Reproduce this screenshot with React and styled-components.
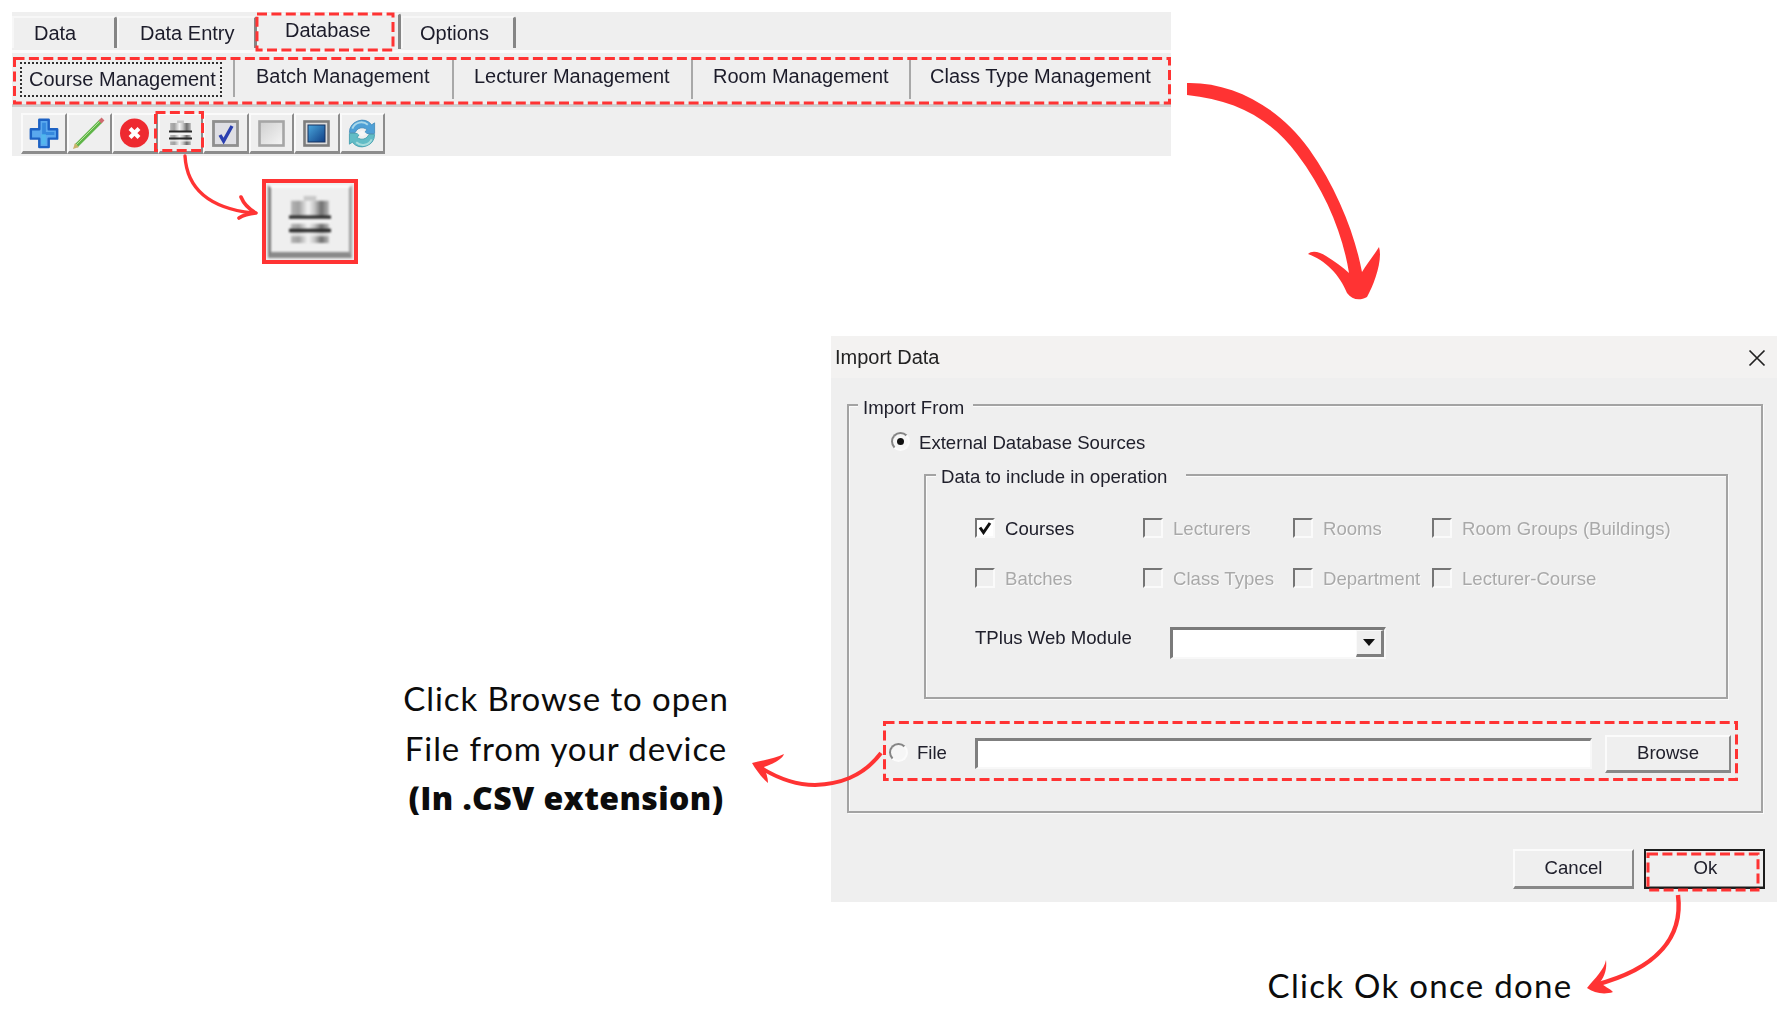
import React from "react";
import styled, { createGlobalStyle } from "styled-components";

const Global = createGlobalStyle`
  html, body { margin: 0; padding: 0; background: #fff; }
  * { box-sizing: border-box; }
`;

const Canvas = styled.div`
  position: relative;
  width: 1788px;
  height: 1020px;
  overflow: hidden;
  background: #fff;
  font-family: "Liberation Sans", Arial, sans-serif;
`;

/* ---------- app ribbon window ---------- */
const Ribbon = styled.section`
  position: absolute;
  left: 12px;
  top: 12px;
  width: 1159px;
  height: 144px;
  background: #efefef;
  display: flex;
  flex-direction: column;
  filter: blur(0.5px);
  color: #1c1c2a;
  font-size: 20px;
`;

const TabRow = styled.div`
  display: flex;
  height: 38px;
  padding-top: 4px;
  flex: none;
`;

const Tab = styled.div`
  flex: none;
  width: ${(p) => p.$w}px;
  height: ${(p) => (p.$raised ? 36 : 32)}px;
  margin-top: ${(p) => (p.$raised ? -3 : 0)}px;
  padding-left: ${(p) => p.$pad}px;
  line-height: ${(p) => (p.$raised ? 31 : 30)}px;
  border-top: 2px solid #f7f7f7;
  border-left: 2px solid #f7f7f7;
  border-right: 3px solid #858585;
  border-top-right-radius: 3px;
  white-space: nowrap;
`;

const SubBar = styled.div`
  display: flex;
  height: 57px;
  flex: none;
  padding-top: 6px;
  border-top: 3px solid #fbfbfb;
  border-bottom: 3px solid #cfcfcf;
`;

const SubTab = styled.div`
  flex: none;
  width: ${(p) => p.$w}px;
  height: 40px;
  padding-left: ${(p) => p.$pad}px;
  line-height: 34px;
  white-space: nowrap;
  border-right: ${(p) => (p.$last ? "none" : "2px solid #a8a8a8")};
`;

const FocusTab = styled.div`
  flex: none;
  width: 223px;
  height: 38px;
  padding: 3px 0 0 8px;
  border-right: 2px solid #a8a8a8;
`;

const FocusLabel = styled.div`
  width: 202px;
  height: 35px;
  padding-left: 7px;
  line-height: 30px;
  white-space: nowrap;
  border: 2px dotted #303030;
`;

const Toolbar = styled.div`
  display: flex;
  padding: 6px 0 0 9px;
`;

const ToolButton = styled.div`
  width: 45.5px;
  height: 41px;
  flex: none;
  display: flex;
  align-items: center;
  justify-content: center;
  background: #efefef;
  border-top: 2px solid #fafafa;
  border-left: 2px solid #fafafa;
  border-right: 2px solid #8c8c8c;
  border-bottom: 3px solid #8c8c8c;
`;

const ZoomFrame = styled.div`
  position: absolute;
  left: 262px;
  top: 179px;
  width: 96px;
  height: 85px;
  border: 4px solid #ff3333;
  background: #efefef;
  padding: 2px;
  display: flex;
`;

const ZoomButton = styled.div`
  flex: 1;
  display: flex;
  align-items: center;
  justify-content: center;
  border-top: 3px solid #fafafa;
  border-left: 3px solid #7c7c7c;
  border-right: 3px solid #a0a0a0;
  border-bottom: 6px solid #8a8a8a;
  filter: blur(1.1px);
`;

/* ---------- import dialog ---------- */
const Dialog = styled.section`
  position: absolute;
  left: 831px;
  top: 336px;
  width: 946px;
  height: 566px;
  background: #efefef;
  display: flex;
  flex-direction: column;
  font-size: 18.6px;
  color: #20202c;
  filter: blur(0.45px);
`;

const TitleBar = styled.header`
  height: 42px;
  flex: none;
  background: #f3f2f1;
  display: flex;
  align-items: center;
  justify-content: space-between;
  padding: 4px 11px 3px 4px;
  font-size: 20px;
  color: #222;
`;

const Body = styled.div`
  flex: 1;
  padding: 26px 14px 0 16px;
  display: flex;
  flex-direction: column;
`;

const Group = styled.div`
  position: relative;
  border: 2px solid #a3a3a3;
  box-shadow: 1px 1px 0 #fbfbfb, inset 1px 1px 0 #fbfbfb;
`;

const OuterGroup = styled(Group)`
  height: 409px;
  padding: 22px 33px 0 42px;
`;

const InnerGroup = styled(Group)`
  height: 225px;
  margin: 16px 0 0 33px;
  padding: 28px 0 0 49px;
`;

const Legend = styled.span`
  position: absolute;
  top: ${(p) => p.$top}px;
  left: ${(p) => p.$left}px;
  width: ${(p) => p.$w}px;
  height: 26px;
  padding-left: 5px;
  line-height: 26px;
  background: #efefef;
  white-space: nowrap;
`;

const RadioRow = styled.label`
  display: flex;
  align-items: center;
  height: 30px;
  gap: 9px;
`;

const Radio = styled.span`
  width: 19px;
  height: 19px;
  flex: none;
  border-radius: 50%;
  background: #f6f6f6;
  border: 2px solid;
  border-color: #858585 #fbfbfb #fbfbfb #858585;
  display: flex;
  align-items: center;
  justify-content: center;
  margin-top: -3px;

  &::after {
    content: "";
    display: ${(p) => (p.$on ? "block" : "none")};
    width: 7px;
    height: 7px;
    border-radius: 50%;
    background: #111;
  }
`;

const CheckGrid = styled.div`
  display: grid;
  grid-template-columns: 168px 150px 139px auto;
  grid-auto-rows: 50px;
  justify-content: start;
`;

const Check = styled.div`
  display: flex;
  align-items: center;
  gap: 10px;
  white-space: nowrap;
  color: ${(p) => (p.$off ? "#a9a9a9" : "#20202c")};
  text-shadow: ${(p) => (p.$off ? "1px 1px 0 #fbfbfb" : "none")};
`;

const CheckBox = styled.span`
  width: 20px;
  height: 20px;
  flex: none;
  margin-top: -2px;
  background: ${(p) => (p.$on ? "#fff" : "#efefef")};
  border-top: 2px solid #757575;
  border-left: 2px solid #757575;
  border-right: 2px solid #fafafa;
  border-bottom: 2px solid #fafafa;
  display: flex;
  align-items: center;
  justify-content: center;
`;

const ComboRow = styled.div`
  display: flex;
  align-items: flex-start;
  margin-top: 24px;
`;

const ComboLabel = styled.span`
  width: 195px;
  flex: none;
  line-height: 20px;
  white-space: nowrap;
`;

const Combo = styled.div`
  width: 216px;
  height: 32px;
  flex: none;
  background: #fff;
  margin-top: -1px;
  border-top: 3px solid #7a7a7a;
  border-left: 3px solid #7a7a7a;
  border-right: 2px solid #f8f8f8;
  border-bottom: 2px solid #f8f8f8;
  display: flex;
  justify-content: flex-end;
`;

const ComboButton = styled.div`
  width: 28px;
  background: #efefef;
  border-top: 1px solid #fafafa;
  border-left: 1px solid #fafafa;
  border-right: 3px solid #7f7f7f;
  border-bottom: 3px solid #7f7f7f;
  display: flex;
  align-items: center;
  justify-content: center;

  &::after {
    content: "";
    border-left: 6px solid transparent;
    border-right: 6px solid transparent;
    border-top: 7px solid #111;
  }
`;

const FileRow = styled.div`
  display: flex;
  align-items: center;
  height: 38px;
  margin: 36px 0 0 -2px;
`;

const FileLabel = styled.span`
  width: 58px;
  flex: none;
  margin-top: -2px;
`;

const FileInput = styled.div`
  width: 617px;
  height: 31px;
  flex: none;
  margin-top: -2px;
  background: #fff;
  border-top: 3px solid #7f7f7f;
  border-left: 3px solid #7f7f7f;
  border-right: 2px solid #f8f8f8;
  border-bottom: 2px solid #f8f8f8;
`;

const WinButton = styled.div`
  flex: none;
  width: ${(p) => p.$w}px;
  height: ${(p) => p.$h}px;
  margin-left: ${(p) => p.$ml || 0}px;
  display: flex;
  align-items: center;
  justify-content: center;
  padding-bottom: 2px;
  background: #efefef;
  border-top: 2px solid #fbfbfb;
  border-left: 2px solid #fbfbfb;
  border-right: 2px solid #888;
  border-bottom: 3px solid #888;
`;

const DefaultButton = styled(WinButton)`
  outline: 2px solid #1d1d1d;
  outline-offset: -2px;
  border-top-color: #fbfbfb;
  padding: 0 0 2px 2px;
`;

const Footer = styled.footer`
  display: flex;
  justify-content: flex-end;
  margin: 36px -2px 0 0;
`;

/* ---------- annotations ---------- */
const Overlay = styled.svg`
  position: absolute;
  inset: 0;
  width: 1788px;
  height: 1020px;
  pointer-events: none;
`;

const Note = styled.div`
  position: absolute;
  left: ${(p) => p.$x}px;
  top: ${(p) => p.$y}px;
  width: ${(p) => p.$w}px;
  text-align: center;
  font-family: Lato, "Open Sans", sans-serif;
  font-size: 33px;
  line-height: 50px;
  color: #0c0c0c;
  letter-spacing: ${(p) => p.$track}px;
  white-space: nowrap;
`;

const NoteStrong = styled.strong`
  display: block;
  font-family: "Open Sans", Lato, sans-serif;
  font-size: 32px;
  font-weight: 800;
  letter-spacing: 0.4px;
`;

/* ---------- icons ---------- */
const PlusIcon = () => (
  <svg width="32" height="32" viewBox="0 0 32 34">
    <path d="M11 3h10v10h9v10h-9v9H11v-9H2V13h9z" fill="#5aa8ee" stroke="#1d62c4" strokeWidth="2.6" strokeLinejoin="round" />
    <path d="M14 6h4v10h9v3H14z" fill="#2a7fd8" opacity=".75" />
    <path d="M13 18h5v11h-5z" fill="#4cc0ef" opacity=".6" />
  </svg>
);

const PencilIcon = () => (
  <svg width="38" height="34" viewBox="0 0 36 34">
    <path d="M5 30 30 5" stroke="#5fb548" strokeWidth="4" />
    <path d="M5 29 30 4" stroke="#b7e29c" strokeWidth="1" />
    <path d="M29 6l3-3" stroke="#d06a70" strokeWidth="4" />
    <path d="M2 33l2-6 4 4z" fill="#c9b26a" />
  </svg>
);

const StopIcon = () => (
  <svg width="31" height="32" viewBox="0 0 30 32">
    <circle cx="15" cy="16" r="14.5" fill="#ee2a30" />
    <path d="M10.5 11.5l9 9M19.5 11.5l-9 9" stroke="#fff" strokeWidth="4" />
  </svg>
);

const DatabaseIcon = ({ w, h, id }) => (
  <svg width={w} height={h} viewBox="0 0 20 26" preserveAspectRatio="none">
    <defs>
      <linearGradient id={id} x1="0" y1="0" x2="1" y2="0">
        <stop offset="0" stopColor="#b4b4b4" />
        <stop offset=".2" stopColor="#a0a0a0" />
        <stop offset=".45" stopColor="#f4f4f4" />
        <stop offset=".62" stopColor="#c4c4c4" />
        <stop offset=".8" stopColor="#6e6e6e" />
        <stop offset="1" stopColor="#b8b8b8" />
      </linearGradient>
    </defs>
    <path d="M1 3h18v22H1z" fill={`url(#${id})`} />
    <path d="M7 0.5h6V3H7z" fill="#c8c8c8" />
    <path d="M0 13.5h20" stroke="#f3f3f3" strokeWidth="3" />
    <path d="M0 20.5h20" stroke="#f0f0f0" strokeWidth="2" opacity=".8" />
    <path d="M0 11.5h20M0 18.5h20" stroke="#2a2a2a" strokeWidth="1.8" />
  </svg>
);

const TickIcon = () => (
  <svg width="27" height="27" viewBox="0 0 27 27">
    <rect x="1.5" y="1.5" width="24" height="24" fill="#dfdfe4" stroke="#8f8f8f" strokeWidth="2.8" />
    <path d="M8 15l3.6 6L20 6" fill="none" stroke="#2a3fb0" strokeWidth="3.4" />
  </svg>
);

const BlankIcon = () => (
  <svg width="27" height="27" viewBox="0 0 27 27">
    <defs>
      <linearGradient id="blank" x1="0" y1="0" x2="1" y2="1">
        <stop offset="0" stopColor="#cfcfcf" />
        <stop offset="1" stopColor="#f6f6f6" />
      </linearGradient>
    </defs>
    <rect x="1.5" y="1.5" width="24" height="24" fill="url(#blank)" stroke="#a6a6a6" strokeWidth="2.6" />
  </svg>
);

const FillIcon = () => (
  <svg width="27" height="27" viewBox="0 0 27 27">
    <defs>
      <linearGradient id="fill" x1="0" y1="0" x2="1" y2="1">
        <stop offset="0" stopColor="#4aa6dc" />
        <stop offset="1" stopColor="#103f86" />
      </linearGradient>
    </defs>
    <rect x="1.5" y="1.5" width="24" height="24" fill="#dcdcdc" stroke="#7d7d7d" strokeWidth="2.6" />
    <rect x="5" y="5" width="17" height="17" fill="url(#fill)" stroke="#17335f" strokeWidth="1" />
  </svg>
);

const RefreshIcon = () => (
  <svg width="32" height="31" viewBox="0 0 32 32">
    <path d="M3 15A13 13 0 0 1 26 7l3-2v11h-11l3-4a7.5 7.5 0 0 0-12 3z" fill="#4fa0d6" stroke="#3d87b5" strokeWidth=".8" />
    <path d="M6 11A10 10 0 0 1 22 7" fill="none" stroke="#a9d8ea" strokeWidth="2" />
    <path d="M29 17A13 13 0 0 1 6 25l-3 2V16h11l-3 4a7.5 7.5 0 0 0 12-3z" fill="#62bcc6" stroke="#3a98a8" strokeWidth=".8" />
    <path d="M26 22A10 10 0 0 1 10 25" fill="none" stroke="#a6dcdc" strokeWidth="2" />
    <path d="M11 16l5-3 5 3-5 3z" fill="#f6f6f6" />
  </svg>
);

const CloseIcon = () => (
  <svg width="18" height="18" viewBox="0 0 18 18">
    <path d="M1.5 1.5l15 15M16.5 1.5l-15 15" stroke="#222" strokeWidth="1.7" />
  </svg>
);

const CheckMark = () => (
  <svg width="14" height="14" viewBox="0 0 14 14">
    <path d="M2 6.5l3.5 5L12 2" fill="none" stroke="#111" strokeWidth="3" />
  </svg>
);

const DashRect = ({ x, y, w, h }) => (
  <rect x={x} y={y} width={w} height={h} fill="none" stroke="#ff3333" strokeWidth="3" strokeDasharray="10 4.4" />
);

const Annotations = () => (
  <Overlay viewBox="0 0 1788 1020">
    <DashRect x={257} y={14} w={136} h={36} />
    <DashRect x={14.5} y={58.5} w={1155} h={44.5} />
    <DashRect x={155.5} y={112.5} w={47} h={38} />
    <DashRect x={884.5} y={722.5} w={852} h={57} />
    <DashRect x={1648} y={854} w={110} h={36} />

    <path d="M185 156C187 190 210 208 252 213" fill="none" stroke="#ff3333" strokeWidth="3.4" strokeLinecap="round" />
    <path d="M241 197Q245 207 256 213Q245 214 239 218" fill="none" stroke="#ff3333" strokeWidth="3.6" strokeLinecap="round" strokeLinejoin="round" />

    <path
      fill="#ff3333"
      d="M1187 83C1232 82 1278 106 1309 149C1338 190 1355 235 1362 272C1367 264 1374 255 1379 247C1383 260 1374 285 1367 297C1360 301 1352 300 1347 293C1340 275 1325 260 1308 254C1312 250 1320 252 1326 256C1335 262 1343 267 1349 273C1343 235 1326 192 1297 154C1270 118 1235 100 1187 95Z"
    />

    <path d="M881 753C862 778 838 784 815 785C795 785 775 777 758 766" fill="none" stroke="#ff3333" strokeWidth="4" />
    <path fill="#ff3333" d="M752 763C764 760 776 758 784 754C782 760 772 764 764 767C766 772 768 778 768 783C762 778 756 770 752 763Z" />

    <path d="M1678 895C1683 935 1660 968 1595 985" fill="none" stroke="#ff3333" strokeWidth="4.4" />
    <path fill="#ff3333" d="M1587 988C1595 978 1604 970 1606 960C1607 968 1605 976 1600 982C1604 987 1610 988 1613 992C1604 995 1594 993 1587 988Z" />
  </Overlay>
);

const tabs = [
  { label: "Data", w: 105, pad: 20 },
  { label: "Data Entry", w: 140, pad: 21 },
  { label: "Database", w: 144, pad: 26, raised: true },
  { label: "Options", w: 115, pad: 17 },
];

const subTabs = [
  { label: "Batch Management", w: 219, pad: 21 },
  { label: "Lecturer Management", w: 239, pad: 20 },
  { label: "Room Management", w: 218, pad: 20 },
  { label: "Class Type Management", w: 250, pad: 19, last: true },
];

const boxes = [
  { label: "Courses", on: true },
  { label: "Lecturers" },
  { label: "Rooms" },
  { label: "Room Groups (Buildings)" },
  { label: "Batches" },
  { label: "Class Types" },
  { label: "Department" },
  { label: "Lecturer-Course" },
];

export default function App() {
  return (
    <Canvas>
      <Global />
      <Ribbon>
        <TabRow>
          {tabs.map((t) => (
            <Tab key={t.label} $w={t.w} $pad={t.pad} $raised={t.raised}>
              {t.label}
            </Tab>
          ))}
        </TabRow>
        <SubBar>
          <FocusTab>
            <FocusLabel>Course Management</FocusLabel>
          </FocusTab>
          {subTabs.map((t) => (
            <SubTab key={t.label} $w={t.w} $pad={t.pad} $last={t.last}>
              {t.label}
            </SubTab>
          ))}
        </SubBar>
        <Toolbar>
          <ToolButton><PlusIcon /></ToolButton>
          <ToolButton><PencilIcon /></ToolButton>
          <ToolButton><StopIcon /></ToolButton>
          <ToolButton><DatabaseIcon w={23} h={26} id="dbSmall" /></ToolButton>
          <ToolButton><TickIcon /></ToolButton>
          <ToolButton><BlankIcon /></ToolButton>
          <ToolButton><FillIcon /></ToolButton>
          <ToolButton><RefreshIcon /></ToolButton>
        </Toolbar>
      </Ribbon>

      <ZoomFrame>
        <ZoomButton><DatabaseIcon w={42} h={50} id="dbLarge" /></ZoomButton>
      </ZoomFrame>

      <Dialog>
        <TitleBar>
          <span>Import Data</span>
          <CloseIcon />
        </TitleBar>
        <Body>
          <OuterGroup>
            <Legend $top={-11} $left={9} $w={115}>Import From</Legend>
            <RadioRow>
              <Radio $on />
              External Database Sources
            </RadioRow>
            <InnerGroup>
              <Legend $top={-12} $left={10} $w={250}>Data to include in operation</Legend>
              <CheckGrid>
                {boxes.map((b) => (
                  <Check key={b.label} $off={!b.on}>
                    <CheckBox $on={b.on}>{b.on && <CheckMark />}</CheckBox>
                    {b.label}
                  </Check>
                ))}
              </CheckGrid>
              <ComboRow>
                <ComboLabel>TPlus Web Module</ComboLabel>
                <Combo><ComboButton /></Combo>
              </ComboRow>
            </InnerGroup>
            <FileRow>
              <RadioRow>
                <Radio />
                <FileLabel>File</FileLabel>
              </RadioRow>
              <FileInput />
              <WinButton $w={126} $h={38} $ml={13}>Browse</WinButton>
            </FileRow>
          </OuterGroup>
          <Footer>
            <WinButton $w={121} $h={40}>Cancel</WinButton>
            <DefaultButton $w={121} $h={40} $ml={10}>Ok</DefaultButton>
          </Footer>
        </Body>
      </Dialog>

      <Annotations />

      <Note $x={366} $y={673} $w={400} $track={0.9}>
        Click Browse to open
        <br />
        File from your device
        <NoteStrong>(In .CSV extension)</NoteStrong>
      </Note>
      <Note $x={1220} $y={960} $w={400} $track={1.3}>Click Ok once done</Note>
    </Canvas>
  );
}
